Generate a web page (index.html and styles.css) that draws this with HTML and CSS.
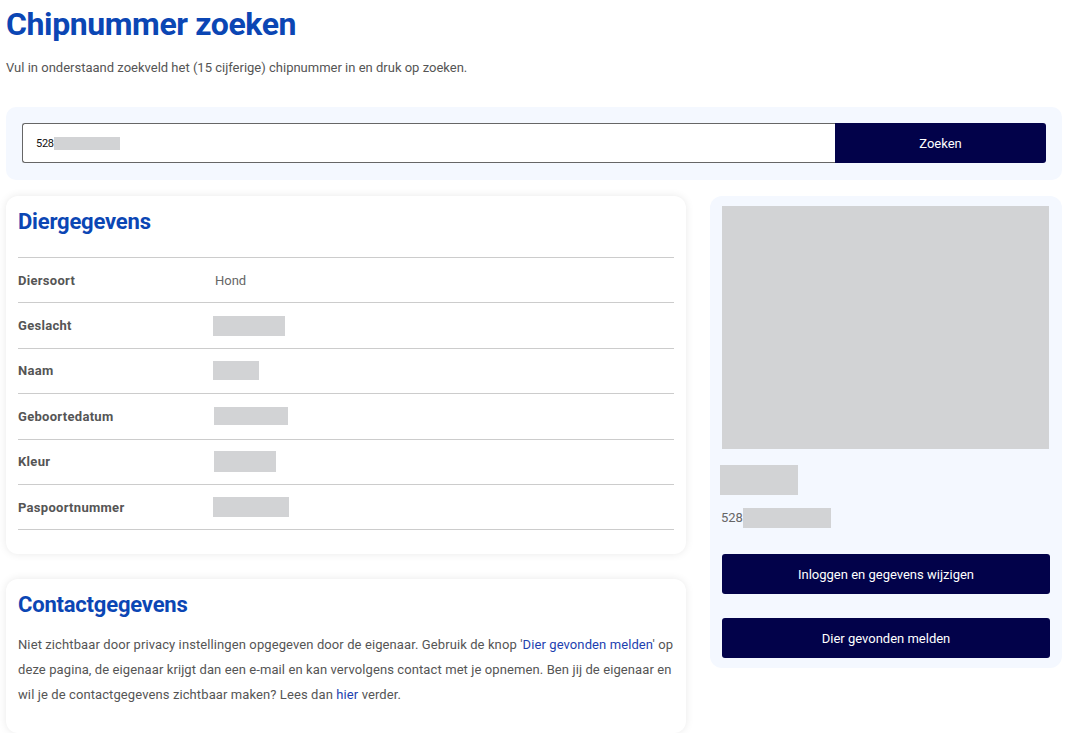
FILE: index.html
```html
<!DOCTYPE html>
<html lang="nl">
<head>
    <meta charset="UTF-8">
    <meta name="viewport" content="width=device-width, initial-scale=1.0">
    <title>Chipnummer zoeken</title>
    <link rel="stylesheet" href="styles.css">
</head>
<body>
    <div class="page">
        <h1 class="page-title">Chipnummer zoeken</h1>
        <p class="intro">Vul in onderstaand zoekveld het (15 cijferige) chipnummer in en druk op zoeken.</p>

        <form class="search" onsubmit="return false">
            <div class="search-input"><span class="typed">528</span><span class="redacted r-input"></span></div>
            <button class="btn search-btn" type="submit">Zoeken</button>
        </form>

        <div class="content">
            <div class="main-col">
                <div class="card">
                    <h2 class="card-title">Diergegevens</h2>
                    <table class="details">
                        <tr><th>Diersoort</th><td>Hond</td></tr>
                        <tr><th>Geslacht</th><td><span class="redacted r-1"></span></td></tr>
                        <tr><th>Naam</th><td><span class="redacted r-2"></span></td></tr>
                        <tr><th>Geboortedatum</th><td><span class="redacted r-3"></span></td></tr>
                        <tr><th>Kleur</th><td><span class="redacted r-4"></span></td></tr>
                        <tr><th>Paspoortnummer</th><td><span class="redacted r-5"></span></td></tr>
                    </table>
                </div>

                <div class="card contact">
                    <h2 class="card-title">Contactgegevens</h2>
                    <p>Niet zichtbaar door privacy instellingen opgegeven door de eigenaar. Gebruik de knop '<a href="#">Dier gevonden melden</a>' op deze pagina, de eigenaar krijgt dan een e-mail en kan vervolgens contact met je opnemen. Ben jij de eigenaar en wil je de contactgegevens zichtbaar maken? Lees dan <a href="#">hier</a> verder.</p>
                </div>
            </div>

            <aside class="side">
                <div class="photo"></div>
                <div class="redacted r-name"></div>
                <div class="chip-line">528<span class="redacted r-chip"></span></div>
                <a class="btn side-btn" href="#">Inloggen en gegevens wijzigen</a>
                <a class="btn side-btn" href="#">Dier gevonden melden</a>
            </aside>
        </div>
    </div>
</body>
</html>
```

FILE: styles.css
```css
body {
    margin: 0;
    font-family: Roboto, "Liberation Sans", sans-serif;
    color: #555;
    background: #fff;
}
.page {
    padding: 0 10px 0 6px;
}
.page-title {
    margin: 0;
    padding-top: 6px;
    font-size: 32px;
    line-height: 36px;
    font-weight: 700;
    color: #0b46b4;
    letter-spacing: -0.4px;
}
.intro {
    margin: 16px 0 0;
    font-size: 13px;
    line-height: 20px;
    letter-spacing: 0;
}

/* zoekbalk */
.search {
    display: flex;
    margin-top: 29px;
    padding: 16px 16px 17px;
    background: #f4f8ff;
    border-radius: 10px;
}
.search-input {
    flex: 1;
    display: flex;
    align-items: center;
    height: 38px;
    padding-left: 13px;
    border: 1px solid #666;
    border-right: 0;
    border-radius: 3px 0 0 3px;
    background: #fff;
}
.typed {
    font-size: 11px;
    color: #111;
    letter-spacing: -0.3px;
}
.redacted {
    display: inline-block;
    background: #d2d3d5;
}
.r-input { width: 66px; height: 13px; }
.btn {
    background: #02024a;
    color: #fff;
    border: 0;
    border-radius: 0 3px 3px 0;
    font-family: inherit;
    font-size: 13px;
    text-decoration: none;
}
.search-btn {
    width: 211px;
    height: 40px;
}

/* inhoud */
.content {
    display: flex;
    gap: 24px;
    margin-top: 16px;
}
.main-col {
    width: 680px;
    display: flex;
    flex-direction: column;
    gap: 25px;
}
.card {
    background: #fff;
    border-radius: 12px;
    box-shadow: 0 0 8px rgba(0, 0, 0, 0.09);
    padding: 12px 12px 24px;
}
.card-title {
    margin: 0;
    font-size: 22px;
    line-height: 28px;
    font-weight: 700;
    color: #0b46b4;
    letter-spacing: -0.2px;
}
.details {
    width: 100%;
    margin-top: 21px;
    border-collapse: collapse;
    border-top: 1px solid #ccc;
}
.details tr {
    border-bottom: 1px solid #ccc;
    height: 45.4px;
}
.details th {
    width: 197px;
    padding: 0;
    text-align: left;
    font-size: 13px;
    font-weight: 700;
    color: #555;
    letter-spacing: 0.3px;
}
.details td {
    padding: 0;
    font-size: 13px;
    color: #666;
}
.details td .redacted { vertical-align: middle; }
.r-1 { width: 72px; height: 20px; margin-left: -2px; }
.r-2 { width: 46px; height: 19px; margin-left: -2px; }
.r-3 { width: 74px; height: 18px; margin-left: -1px; }
.r-4 { width: 62px; height: 21px; margin-left: -1px; }
.r-5 { width: 76px; height: 20px; margin-left: -2px; }

.contact {
    padding-bottom: 26px;
}
.contact p {
    margin: 13px 0 0;
    font-size: 13px;
    line-height: 25px;
    letter-spacing: 0.1px;
}
.contact a {
    color: #1d3fb0;
    text-decoration: none;
}

/* zijkolom */
.side {
    flex: 1;
    align-self: flex-start;
    background: #f4f8ff;
    border-radius: 12px;
    padding: 10px 12px 10px 12px;
    display: flex;
    flex-direction: column;
}
.photo {
    height: 243px;
    margin-right: 1px;
    background: #d2d3d5;
}
.r-name {
    width: 78px;
    height: 30px;
    margin: 16px 0 0 -2px;
}
.chip-line {
    margin-top: 13px;
    font-size: 13px;
    line-height: 20px;
    color: #666;
    display: flex;
    align-items: center;
    margin-left: -1px;
}
.r-chip { width: 88px; height: 20px; }
.side-btn {
    display: flex;
    align-items: center;
    justify-content: center;
    height: 40px;
    border-radius: 3px;
    margin-top: 26px;
}
.side-btn + .side-btn {
    margin-top: 24px;
}
```
